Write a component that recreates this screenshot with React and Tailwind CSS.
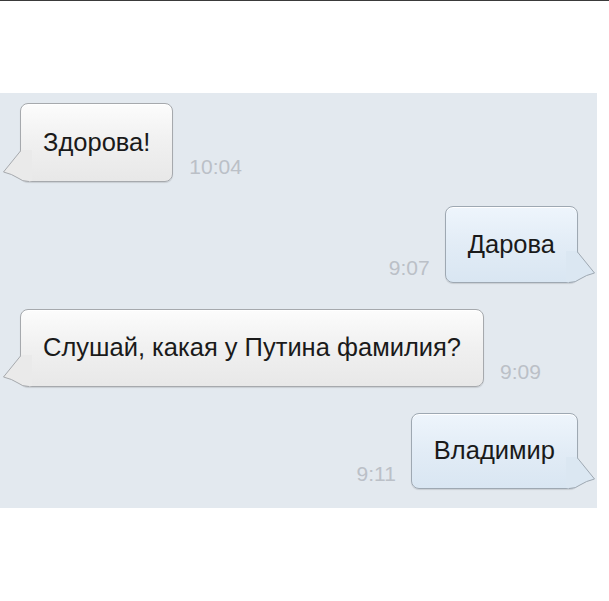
import React from "react";

const messages = [
  { id: 1, text: "Здорова!", time: "10:04", mine: false, h: "h-[79px]", mt: "mt-0" },
  { id: 2, text: "Дарова", time: "9:07", mine: true, h: "h-[77px]", mt: "mt-[24px]" },
  { id: 3, text: "Слушай, какая у Путина фамилия?", time: "9:09", mine: false, h: "h-[78px]", mt: "mt-[26px]" },
  { id: 4, text: "Владимир", time: "9:11", mine: true, h: "h-[76px]", mt: "mt-[26px]" },
];

// little speech tail, drawn once and mirrored for outgoing bubbles
function Tail({ mine }) {
  const fill = mine ? "#dbe7f2" : "#eaeaea";
  const stroke = mine ? "#9ea8b2" : "#a6a9ad";
  return (
    <svg
      width="30"
      height="34"
      viewBox="0 0 30 34"
      className={
        mine
          ? "absolute right-[-19px] bottom-[-1px] -scale-x-100"
          : "absolute left-[-19px] bottom-[-1px]"
      }
    >
      <path
        d="M19.5 2 L1.5 24 Q10 26 16 30 Q20 33.5 27 33.5 L30 33 L30 2 Z"
        fill={fill}
      />
      <path
        d="M18.5 3 L1.5 24 Q10 26 16 30 Q20 33.5 27 33.5"
        fill="none"
        stroke={stroke}
        strokeWidth="1"
      />
    </svg>
  );
}

function Bubble({ msg }) {
  const skin = msg.mine
    ? "bg-gradient-to-b from-[#eef5fc] via-[#e2ecf6] to-[#d9e6f2] border-[#9ea8b2]"
    : "bg-gradient-to-b from-[#fcfcfc] via-[#f0f0f0] to-[#e8e8e8] border-[#a6a9ad]";
  return (
    <div
      className={`relative ${msg.h} flex items-center px-[22px] border rounded-[8px] ${skin} shadow-[inset_0_1px_0_rgba(255,255,255,0.9),0_1px_1px_rgba(0,0,0,0.12)]`}
    >
      <Tail mine={msg.mine} />
      <span className="relative text-[25.5px] leading-none text-[#1a1a1a] whitespace-nowrap">
        {msg.text}
      </span>
    </div>
  );
}

function Time({ value }) {
  return (
    <span className="mb-[5px] text-[21px] leading-none text-[#bbc0c7]">{value}</span>
  );
}

export default function App() {
  return (
    <div
      className="w-[609px] h-[601px] bg-white border-t border-[#3a3a3a]"
      style={{ fontFamily: '"Liberation Sans", Arial, sans-serif' }}
    >
      <div className="mt-[92px] w-[597px] h-[415px] bg-[#e3e9ef] pl-[20px] pr-[19px] pt-[10px] flex flex-col">
        {messages.map((m) =>
          m.mine ? (
            <div key={m.id} className={`${m.mt} flex items-end justify-end gap-[15px]`}>
              <Time value={m.time} />
              <Bubble msg={m} />
            </div>
          ) : (
            <div key={m.id} className={`${m.mt} flex items-end gap-[16px]`}>
              <Bubble msg={m} />
              <Time value={m.time} />
            </div>
          )
        )}
      </div>
    </div>
  );
}
